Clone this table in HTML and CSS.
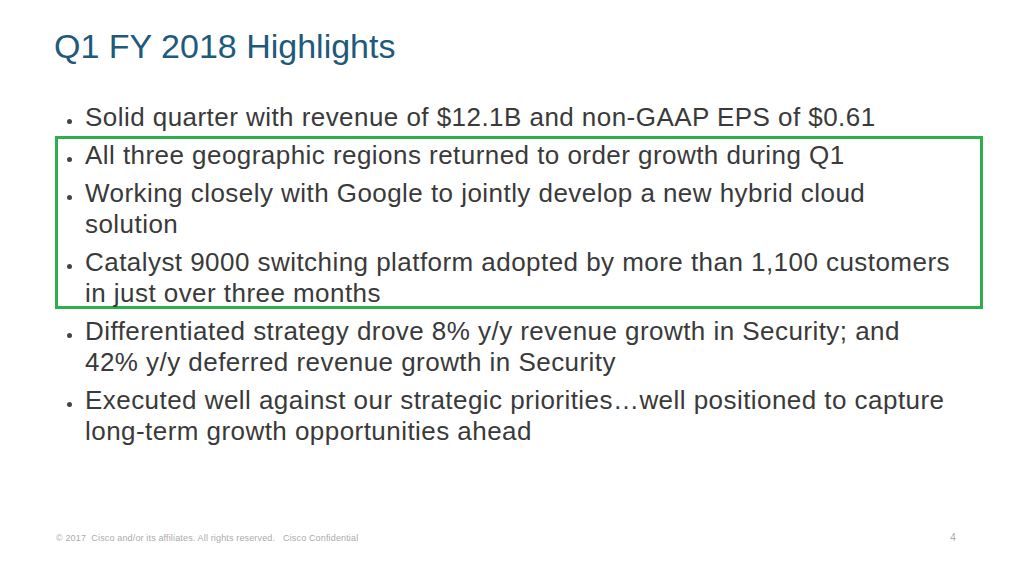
FILE: index.html
```html
<!DOCTYPE html>
<html>
<head>
<meta charset="utf-8">
<title>Q1 FY 2018 Highlights</title>
<link rel="stylesheet" href="styles.css">
</head>
<body>
<div class="slide">
  <h1 class="title">Q1 FY 2018 Highlights</h1>
  <ul class="bullets">
    <li><span class="dot"></span><span class="txt">Solid quarter with revenue of $12.1B and non-GAAP EPS of $0.61</span></li>
  </ul>
  <div class="box">
    <ul class="bullets">
      <li><span class="dot"></span><span class="txt">All three geographic regions returned to order growth during Q1</span></li>
      <li><span class="dot"></span><span class="txt">Working closely with Google to jointly develop a new hybrid cloud<br>solution</span></li>
      <li><span class="dot"></span><span class="txt">Catalyst 9000 switching platform adopted by more than 1,100 customers<br>in just over three months</span></li>
    </ul>
  </div>
  <ul class="bullets">
    <li><span class="dot"></span><span class="txt">Differentiated strategy drove 8% y/y revenue growth in Security; and<br>42% y/y deferred revenue growth in Security</span></li>
    <li><span class="dot"></span><span class="txt">Executed well against our strategic priorities…well positioned to capture<br>long-term growth opportunities ahead</span></li>
  </ul>
  <div class="footer">
    <span class="copy">© 2017&nbsp;&nbsp;Cisco and/or its affiliates. All rights reserved.&nbsp;&nbsp;&nbsp;Cisco Confidential</span>
    <span class="page">4</span>
  </div>
</div>
</body>
</html>
```

FILE: styles.css
```css
html, body {
  margin: 0;
  padding: 0;
  background: #ffffff;
}
.slide {
  width: 1015px;
  height: 567px;
  box-sizing: border-box;
  padding: 26px 0 0 0;
  font-family: "Liberation Sans", Arial, sans-serif;
  display: flex;
  flex-direction: column;
}
.title {
  margin: 0 0 0 54px;
  font-size: 34px;
  font-weight: normal;
  line-height: 40px;
  color: #1e5a7b;
}
.bullets {
  list-style: none;
  margin: 0;
  padding: 0;
}
.slide > .bullets {
  margin-left: 58px;
}
.slide > .bullets:first-of-type {
  margin-top: 36px;
}
.bullets li {
  display: flex;
  align-items: flex-start;
  font-size: 26px;
  letter-spacing: 0.45px;
  line-height: 31px;
  color: #3a3a3a;
  margin-top: 7px;
  width: 930px;
  white-space: nowrap;
}
.bullets li:first-child {
  margin-top: 0;
}
.dot {
  flex: none;
  width: 5px;
  height: 5px;
  border-radius: 50%;
  background: #444;
  margin: 17px 13px 0 9px;
}
.txt {
  flex: 1;
}
.box {
  margin: 3px 0 0 55px;
  width: 928px;
  box-sizing: border-box;
  border: 3px solid #2cb04c;
  padding: 1px 0 0 0;
  height: 173px;
}
.slide > .bullets:last-of-type {
  margin-top: 7px;
}
.footer {
  margin-top: auto;
  margin-bottom: 24px;
  display: flex;
  justify-content: space-between;
  align-items: baseline;
  padding: 0 59px 0 56px;
  color: #ababab;
  font-size: 9px;
  letter-spacing: 0.15px;
}
.footer .page {
  font-size: 10px;
}
```
